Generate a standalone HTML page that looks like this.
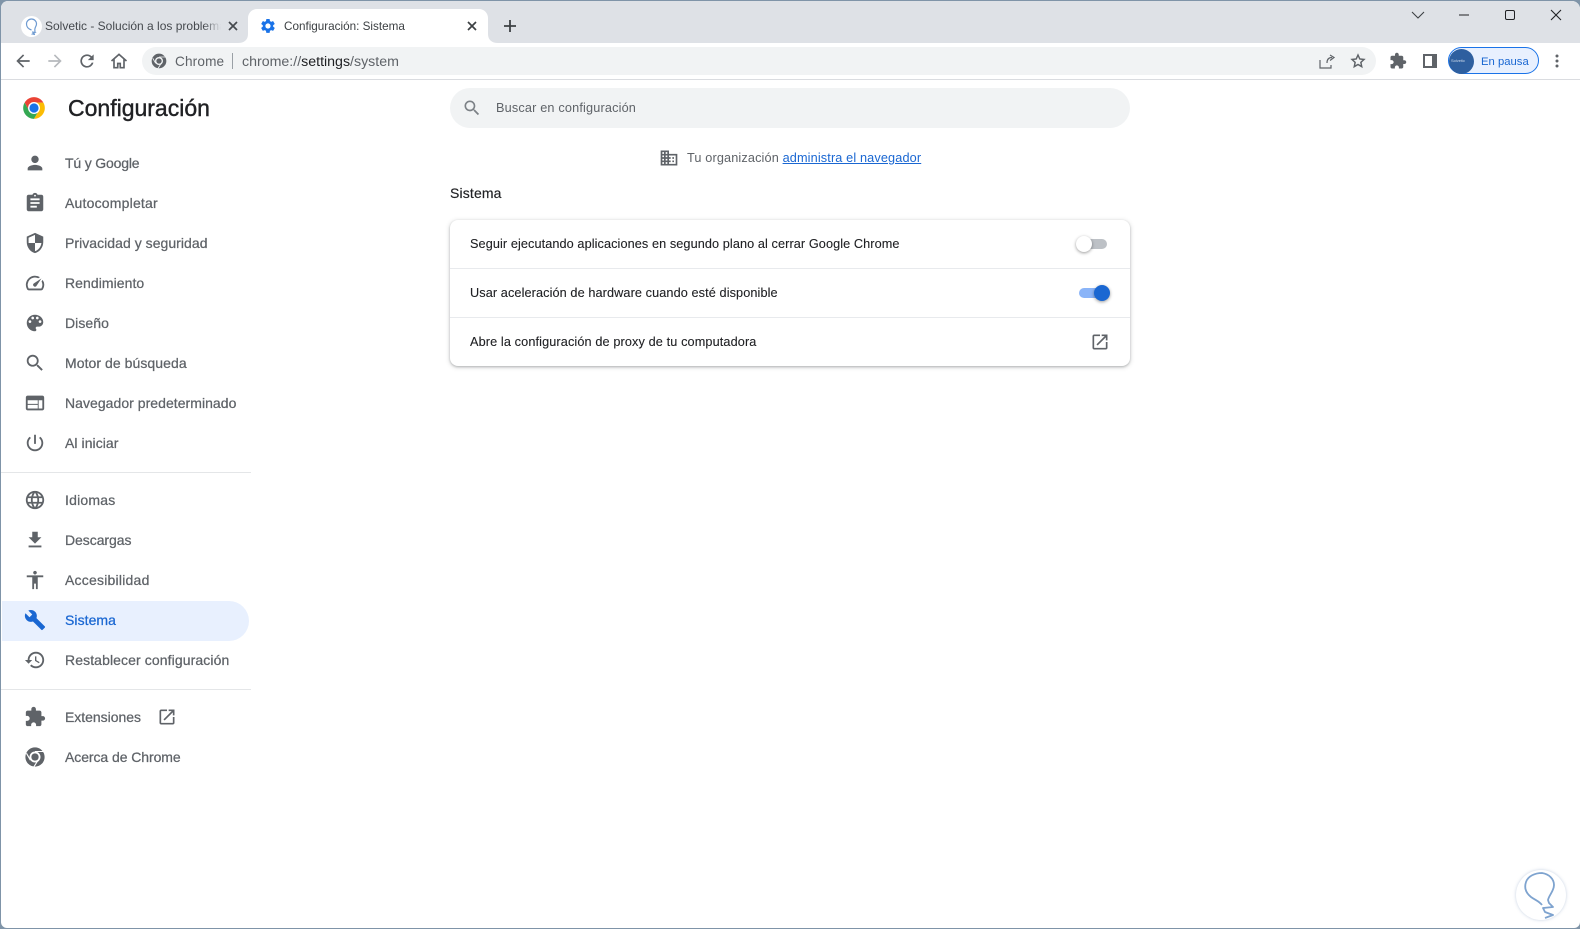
<!DOCTYPE html>
<html lang="es"><head><meta charset="utf-8"><title>Configuración: Sistema</title>
<style>
html,body{margin:0;padding:0;width:1580px;height:929px;overflow:hidden;background:#7f94a8}
body{font-family:"Liberation Sans",sans-serif;position:relative}
#w{position:absolute;left:1px;top:1px;width:1579px;height:927px;background:#fff;border-radius:7px 8px 6px 6px;overflow:hidden}
#p{position:absolute;left:-1px;top:-1px;width:1580px;height:929px}
.a{position:absolute;white-space:nowrap}
svg{position:absolute;display:block}
.n{left:65px;font-size:14px;letter-spacing:.06px;line-height:20px;height:20px;color:#5f6368;-webkit-text-stroke:.25px #5f6368}
.r{left:470px;font-size:12.7px;letter-spacing:.1px;line-height:20px;height:20px;color:#202124;-webkit-text-stroke:.1px #202124}
.i{left:24px;width:22px;height:22px;fill:#5f6368}
</style></head><body><div id="w"><div id="p">
<div class="a" style="left:0;top:0;width:1580px;height:43px;background:#dee1e6"></div>
<div class="a" style="left:0;top:79px;width:1580px;height:1px;background:#dadce0"></div>

<!-- tabs -->
<svg style="left:238px;top:9px" width="260" height="34"><path d="M0 34c6 0 10-3 10-9V9c0-5 4-9 9-9h222c5 0 9 4 9 9v16c0 6 4 9 10 9z" fill="#fff"/></svg>
<div class="a" style="left:21px;top:16px;width:21px;height:21px;border-radius:50%;background:#fff"></div>
<svg style="left:21px;top:16px" width="21" height="21" viewBox="0 0 21 21" fill="none" stroke="#6f9bd1" stroke-width="1.2"><path d="M10.500 14c-3-1-5-3-5-6a5 5 0 0 1 10 0c0 2-1.500 3-1.700 5.500l.2 2.500M11 16l3 .5-2.500 1.500 2.500.5"/></svg>
<div class="a" style="left:45px;top:17px;width:176px;overflow:hidden;font-size:12px;line-height:18px;color:#45494e;-webkit-mask-image:linear-gradient(90deg,#000 90%,transparent)">Solvetic - Solución a los problemas informáticos</div>
<svg style="left:225px;top:18px" width="16" height="16" viewBox="0 0 16 16" stroke="#45494e" stroke-width="1.700"><path d="M4 4l8 8M12 4l-8 8"/></svg>
<svg style="left:260px;top:17px;fill:#1a73e8" width="16" height="18" viewBox="0 0 24 24"><path transform="translate(-1 -1) scale(1.08)" d="M19.140 12.940c.04-.3.06-.61.06-.94 0-.32-.02-.64-.07-.94l2.030-1.580c.18-.14.23-.41.12-.61l-1.920-3.320c-.12-.22-.37-.29-.59-.22l-2.390.96c-.5-.38-1.030-.7-1.620-.94l-.36-2.540c-.04-.24-.24-.41-.48-.41h-3.840c-.24 0-.43.17-.47.41l-.36 2.540c-.59.24-1.130.57-1.620.94l-2.390-.96c-.22-.08-.47 0-.59.22L2.740 8.870c-.12.21-.08.47.12.61l2.030 1.580c-.05.3-.09.63-.09.94s.02.64.07.94l-2.030 1.580c-.18.14-.23.41-.12.61l1.920 3.320c.12.22.37.29.59.22l2.390-.96c.5.38 1.030.7 1.620.94l.36 2.540c.05.24.24.41.48.41h3.840c.24 0 .44-.17.47-.41l.36-2.540c.59-.24 1.130-.56 1.620-.94l2.390.96c.22.08.47 0 .59-.22l1.920-3.320c.12-.22.07-.47-.12-.61l-2.010-1.580zM12 15.600c-1.980 0-3.600-1.620-3.600-3.600s1.620-3.600 3.600-3.600 3.600 1.620 3.600 3.600-1.620 3.600-3.600 3.600z"/></svg>
<div class="a" style="left:284px;top:18px;font-size:11.7px;line-height:18px;color:#3c4043">Configuración: Sistema</div>
<svg style="left:464px;top:18px" width="16" height="16" viewBox="0 0 16 16" stroke="#3c4043" stroke-width="1.700"><path d="M4 4l8 8M12 4l-8 8"/></svg>
<svg style="left:502px;top:18px" width="16" height="16" viewBox="0 0 16 16" stroke="#3c4043" stroke-width="1.800"><path d="M8 2v12M2 8h12"/></svg>

<!-- window controls -->
<svg style="left:1410px;top:9px" width="16" height="12" fill="none" stroke="#3c4043" stroke-width="1.100"><path d="M2 3l6 6 6-6"/></svg>
<svg style="left:1458px;top:9px" width="12" height="12" stroke="#202124" stroke-width="1.100"><path d="M1 6h10"/></svg>
<div class="a" style="left:1505px;top:10px;width:8px;height:8px;border:1.200px solid #202124;border-radius:2px"></div>
<svg style="left:1550px;top:9px" width="12" height="12" stroke="#202124" stroke-width="1.100"><path d="M1 1l10 10M11 1L1 11"/></svg>

<!-- toolbar -->
<svg style="left:13px;top:51px" width="20" height="20" viewBox="0 0 24 24" fill="#5f6368"><path d="M20 11H7.830l5.590-5.590L12 4l-8 8 8 8 1.410-1.410L7.830 13H20z"/></svg>
<svg style="left:45px;top:51px" width="20" height="20" viewBox="0 0 24 24" fill="#b6b9bd"><path d="M4 13h12.170l-5.590 5.590L12 20l8-8-8-8-1.410 1.410L16.170 11H4z"/></svg>
<svg style="left:77px;top:51px" width="20" height="20" viewBox="0 0 24 24" fill="#5f6368"><path d="M17.650 6.350A7.960 7.960 0 0 0 12 4a8 8 0 1 0 7.730 10h-2.080A6 6 0 1 1 12 6c1.660 0 3.140.69 4.220 1.780L13 11h7V4z"/></svg>
<svg style="left:109px;top:51px" width="20" height="20" viewBox="0 0 24 24" fill="none" stroke="#5f6368" stroke-width="2"><path d="M3 12L12 4l9 8M6 10v10h4.500v-5h3v5H18V10"/></svg>
<div class="a" style="left:142px;top:47px;width:1234px;height:28px;border-radius:14px;background:#f1f3f4"></div>
<svg style="left:151px;top:53px" width="16" height="16" viewBox="0 0 24 24"><circle cx="12" cy="12" r="11" fill="#5f6368"/><circle cx="12" cy="12" r="6" fill="#f1f3f4"/><circle cx="12" cy="12" r="4" fill="#5f6368"/><path d="M12 6h10M7 15.500L2.700 8M15 16l-5 8" stroke="#f1f3f4" stroke-width="1.300" fill="none"/></svg>
<div class="a" style="left:175px;top:53px;font-size:13.6px;letter-spacing:.15px;line-height:18px;color:#5f6368">Chrome</div>
<div class="a" style="left:232px;top:53px;width:1px;height:16px;background:#9aa0a6"></div>
<div class="a" style="left:242px;top:53px;font-size:14.2px;line-height:18px;color:#5f6368">chrome://<span style="color:#202124">settings</span>/system</div>
<svg style="left:1319px;top:53px" width="16" height="16" viewBox="0 0 16 16" fill="none" stroke="#5f6368" stroke-width="1.200"><path d="M1 7v8h11v-3M8 10c0-4 2-5.500 5-5.500M11 2l4 2.500-4 3"/></svg>
<svg style="left:1350px;top:53px" width="16" height="16" viewBox="0 0 24 24" fill="none" stroke="#5f6368" stroke-width="2.200"><path d="M12 3l2.700 6 6.300.7-4.700 4.300 1.300 6.500-5.600-3.300-5.600 3.300 1.300-6.500L3 9.700 9.300 9z"/></svg>
<svg style="left:1389px;top:52px" width="18" height="18" viewBox="0 0 24 24" fill="#5f6368"><path d="M20.500 11H19V7c0-1.100-.9-2-2-2h-4V3.500C13 2.120 11.880 1 10.500 1S8 2.120 8 3.500V5H4c-1.100 0-1.990.9-1.990 2v3.800H3.500c1.490 0 2.700 1.210 2.700 2.700s-1.210 2.700-2.700 2.700H2V20c0 1.100.9 2 2 2h3.800v-1.500c0-1.490 1.210-2.700 2.700-2.700 1.490 0 2.700 1.210 2.700 2.700V22H17c1.100 0 2-.9 2-2v-4h1.500c1.380 0 2.500-1.120 2.500-2.500S21.880 11 20.500 11z"/></svg>
<svg style="left:1423px;top:54px" width="14" height="14"><path d="M0 0h14v14H0z" fill="#5f6368"/><path d="M2 2h7v10H2z" fill="#fff"/></svg>
<div class="a" style="left:1448px;top:47px;width:89px;height:25px;border:1.500px solid #1a73e8;border-radius:14px;background:#e8f0fe"></div>
<div class="a" style="left:1449px;top:49px;width:25px;height:25px;border-radius:50%;background:#2e5f9f"></div>
<div class="a" style="left:1451px;top:58px;font-size:4px;line-height:6px;color:#cfdbea">Solvetic</div>
<div class="a" style="left:1481px;top:53px;font-size:11.3px;line-height:18px;color:#1a67d2">En pausa</div>
<svg style="left:1555px;top:54px" width="4" height="14" fill="#5f6368"><circle cx="2" cy="2" r="1.500"/><circle cx="2" cy="7" r="1.500"/><circle cx="2" cy="12" r="1.500"/></svg>

<!-- header -->
<svg style="left:21px;top:95px" width="26" height="26" viewBox="0 0 48 48"><path d="M24 24L15 29 6.680 14A20 20 0 0 1 41.320 14H24z" fill="#ea4335"/><path d="M24 24l9 5-9 15A20 20 0 0 1 6.680 14L15 29z" fill="#34a853"/><path d="M24 24V14H41.320A20 20 0 0 1 24 44l9-15z" fill="#fbbc04"/><circle cx="24" cy="24" r="11" fill="#fff"/><circle cx="24" cy="24" r="8.500" fill="#1a73e8"/></svg>
<div class="a" style="left:68px;top:94px;font-size:23px;line-height:28px;color:#202124;-webkit-text-stroke:.4px #202124">Configuración</div>

<!-- nav -->
<svg class="a i" style="top:152px" viewBox="0 0 24 24"><path d="M12 12c2.210 0 4-1.790 4-4s-1.790-4-4-4-4 1.790-4 4 1.790 4 4 4zm0 2c-2.670 0-8 1.340-8 4v2h16v-2c0-2.660-5.330-4-8-4z"/></svg>
<div class="a n" style="top:153px;letter-spacing:-.17px">Tú y Google</div>
<svg class="a i" style="top:192px" viewBox="0 0 24 24"><path d="M19 3h-4.180C14.400 1.840 13.300 1 12 1c-1.300 0-2.400.84-2.820 2H5c-1.100 0-2 .9-2 2v14c0 1.100.9 2 2 2h14c1.100 0 2-.9 2-2V5c0-1.100-.9-2-2-2zm-7 0c.55 0 1 .45 1 1s-.45 1-1 1-1-.45-1-1 .45-1 1-1zm2 14H7v-2h7v2zm3-4H7v-2h10v2zm0-4H7V7h10v2z"/></svg>
<div class="a n" style="top:193px;letter-spacing:.2px">Autocompletar</div>
<svg class="a i" style="top:232px" viewBox="0 0 24 24"><path d="M12 1L3 5v6c0 5.550 3.840 10.740 9 12 5.160-1.260 9-6.450 9-12V5l-9-4zm0 10.990h7c-.53 4.120-3.280 7.790-7 8.940V12H5V6.300l7-3.110v8.800z"/></svg>
<div class="a n" style="top:233px;letter-spacing:.04px">Privacidad y seguridad</div>
<svg class="a i" style="top:272px" viewBox="0 0 24 24"><path d="M20.380 8.570l-1.230 1.850a8 8 0 0 1-.22 7.580H5.070A8 8 0 0 1 15.580 6.850l1.850-1.230A10 10 0 0 0 3.350 19a2 2 0 0 0 1.720 1h13.850a2 2 0 0 0 1.740-1 10 10 0 0 0-.27-10.440zm-9.790 6.840a2 2 0 0 0 2.830 0l5.660-8.490-8.490 5.660a2 2 0 0 0 0 2.830z"/></svg>
<div class="a n" style="top:273px">Rendimiento</div>
<svg class="a i" style="top:312px" viewBox="0 0 24 24"><path d="M12 3c-4.970 0-9 4.030-9 9s4.030 9 9 9c.83 0 1.500-.67 1.500-1.500 0-.39-.15-.74-.39-1.010-.23-.26-.38-.61-.38-.99 0-.83.67-1.500 1.500-1.500H16c2.760 0 5-2.240 5-5 0-4.420-4.030-8-9-8zm-5.500 9c-.83 0-1.500-.67-1.500-1.500S5.670 9 6.500 9 8 9.670 8 10.500 7.330 12 6.500 12zm3-4C8.670 8 8 7.330 8 6.500S8.670 5 9.500 5s1.500.67 1.500 1.500S10.330 8 9.500 8zm5 0c-.83 0-1.500-.67-1.500-1.500S13.670 5 14.500 5s1.500.67 1.500 1.500S15.330 8 14.500 8zm3 4c-.83 0-1.500-.67-1.500-1.500S16.670 9 17.500 9s1.500.67 1.500 1.500-.67 1.500-1.500 1.500z"/></svg>
<div class="a n" style="top:313px">Diseño</div>
<svg class="a i" style="top:352px" viewBox="0 0 24 24"><path d="M15.500 14h-.79l-.28-.27C15.410 12.590 16 11.110 16 9.500 16 5.910 13.090 3 9.500 3S3 5.910 3 9.500 5.910 16 9.500 16c1.610 0 3.090-.59 4.230-1.570l.27.28v.79l5 4.990L20.490 19l-4.990-5zm-6 0C7.010 14 5 11.990 5 9.500S7.010 5 9.500 5 14 7.010 14 9.500 11.990 14 9.500 14z"/></svg>
<div class="a n" style="top:353px">Motor de búsqueda</div>
<svg class="a i" style="top:392px" viewBox="0 0 24 24"><path d="M20 4H4c-1.100 0-1.990.9-1.990 2L2 18c0 1.100.9 2 2 2h16c1.100 0 2-.9 2-2V6c0-1.100-.9-2-2-2zm-5 14H4v-4h11v4zm0-5H4V9h11v4zm5 5h-4V9h4v9z"/></svg>
<div class="a n" style="top:393px;letter-spacing:.04px">Navegador predeterminado</div>
<svg class="a i" style="top:432px" viewBox="0 0 24 24"><path d="M13 3h-2v10h2V3zm4.830 2.170l-1.420 1.420C17.990 7.860 19 9.810 19 12c0 3.870-3.130 7-7 7s-7-3.130-7-7c0-2.190 1.010-4.140 2.580-5.420L6.170 5.170C4.230 6.820 3 9.260 3 12c0 4.970 4.030 9 9 9s9-4.030 9-9c0-2.740-1.230-5.180-3.170-6.830z"/></svg>
<div class="a n" style="top:433px">Al iniciar</div>
<div class="a" style="left:1px;top:472px;width:250px;height:1px;background:#e4e6e8"></div>
<svg class="a i" style="top:489px" viewBox="0 0 24 24"><path d="M11.990 2C6.470 2 2 6.480 2 12s4.470 10 9.990 10C17.520 22 22 17.520 22 12S17.520 2 11.990 2zm6.930 6h-2.950c-.32-1.250-.78-2.450-1.380-3.560 1.840.63 3.370 1.910 4.330 3.560zM12 4.040c.83 1.200 1.480 2.530 1.910 3.960h-3.820c.43-1.430 1.080-2.760 1.910-3.960zM4.260 14C4.100 13.360 4 12.690 4 12s.1-1.360.26-2h3.380c-.08.66-.14 1.320-.14 2 0 .68.06 1.340.14 2H4.260zm.82 2h2.950c.32 1.250.78 2.450 1.380 3.560-1.840-.63-3.370-1.900-4.330-3.560zm2.950-8H5.080c.96-1.660 2.490-2.930 4.330-3.560C8.810 5.550 8.350 6.750 8.030 8zM12 19.960c-.83-1.200-1.480-2.530-1.910-3.960h3.820c-.43 1.430-1.080 2.760-1.910 3.960zM14.340 14H9.660c-.09-.66-.16-1.320-.16-2 0-.68.07-1.350.16-2h4.680c.09.65.16 1.320.16 2 0 .68-.07 1.340-.16 2zm.25 5.560c.6-1.110 1.060-2.310 1.380-3.560h2.950c-.96 1.650-2.490 2.930-4.330 3.560zM16.360 14c.08-.66.14-1.320.14-2 0-.68-.06-1.340-.14-2h3.380c.16.64.26 1.310.26 2s-.1 1.360-.26 2h-3.380z"/></svg>
<div class="a n" style="top:490px;letter-spacing:.2px">Idiomas</div>
<svg class="a i" style="top:529px" viewBox="0 0 24 24"><path d="M19 9h-4V3H9v6H5l7 7 7-7zM5 18v2h14v-2H5z"/></svg>
<div class="a n" style="top:530px;letter-spacing:-.05px">Descargas</div>
<svg class="a i" style="top:569px" viewBox="0 0 24 24"><path d="M12 2c1.100 0 2 .9 2 2s-.9 2-2 2-2-.9-2-2 .9-2 2-2zm9 7h-6v13h-2v-6h-2v6H9V9H3V7h18v2z"/></svg>
<div class="a n" style="top:570px;letter-spacing:.22px">Accesibilidad</div>
<div class="a" style="left:2px;top:601px;width:247px;height:40px;background:#e8f0fe;border-radius:0 20px 20px 0"></div>
<svg class="a i" style="top:609px;fill:#1a67d2" viewBox="0 0 24 24"><path d="M22.700 19l-9.100-9.100c.9-2.300.4-5-1.500-6.900-2-2-5-2.400-7.400-1.300L9 6 6 9 1.600 4.700C.4 7.100.9 10.100 2.900 12.100c1.900 1.900 4.600 2.400 6.900 1.500l9.100 9.100c.4.4 1 .4 1.400 0l2.300-2.300c.5-.4.500-1.100.1-1.400z"/></svg>
<div class="a n" style="top:610px;color:#1a67d2;-webkit-text-stroke-color:#1a67d2">Sistema</div>
<svg class="a i" style="top:649px" viewBox="0 0 24 24"><path d="M13 3c-4.970 0-9 4.030-9 9H1l3.890 3.890.07.14L9 12H6c0-3.870 3.130-7 7-7s7 3.130 7 7-3.130 7-7 7c-1.930 0-3.680-.79-4.940-2.060l-1.420 1.420C8.270 19.990 10.510 21 13 21c4.970 0 9-4.030 9-9s-4.030-9-9-9zm-1 5v5l4.280 2.540.72-1.210-3.500-2.080V8H12z"/></svg>
<div class="a n" style="top:650px;letter-spacing:.1px">Restablecer configuración</div>
<div class="a" style="left:1px;top:689px;width:250px;height:1px;background:#e4e6e8"></div>
<svg class="a i" style="top:706px" viewBox="0 0 24 24"><path d="M20.500 11H19V7c0-1.100-.9-2-2-2h-4V3.500C13 2.120 11.880 1 10.500 1S8 2.120 8 3.500V5H4c-1.100 0-1.990.9-1.990 2v3.800H3.500c1.490 0 2.700 1.210 2.700 2.700s-1.210 2.700-2.700 2.700H2V20c0 1.100.9 2 2 2h3.800v-1.500c0-1.490 1.210-2.700 2.700-2.700 1.490 0 2.700 1.210 2.700 2.700V22H17c1.100 0 2-.9 2-2v-4h1.500c1.380 0 2.500-1.120 2.500-2.500S21.880 11 20.500 11z"/></svg>
<div class="a n" style="top:707px;letter-spacing:-.03px">Extensiones</div>
<svg class="a" style="left:157px;top:707px;fill:#5f6368" width="20" height="20" viewBox="0 0 24 24"><path d="M19 19H5V5h7V3H5c-1.110 0-2 .9-2 2v14c0 1.100.89 2 2 2h14c1.100 0 2-.9 2-2v-7h-2v7zM14 3v2h3.590l-9.830 9.830 1.410 1.410L19 6.410V10h2V3h-7z"/></svg>
<svg class="a" style="left:24px;top:746px" width="22" height="22" viewBox="0 0 24 24"><circle cx="12" cy="12" r="10.500" fill="#5f6368"/><circle cx="12" cy="12" r="6" fill="#fff"/><circle cx="12" cy="12" r="4" fill="#5f6368"/><path d="M12 6h9.500M7 15.500L2.700 8M15 16l-5 8" stroke="#fff" stroke-width="1.200" fill="none"/></svg>
<div class="a n" style="top:747px;letter-spacing:-.07px">Acerca de Chrome</div>

<!-- main -->
<div class="a" style="left:450px;top:88px;width:680px;height:40px;border-radius:20px;background:#f1f3f4"></div>
<svg class="a" style="left:462px;top:98px;fill:#7c8186" width="20" height="20" viewBox="0 0 24 24"><path d="M15.500 14h-.79l-.28-.27C15.410 12.590 16 11.110 16 9.500 16 5.910 13.090 3 9.500 3S3 5.910 3 9.500 5.910 16 9.500 16c1.610 0 3.090-.59 4.230-1.570l.27.28v.79l5 4.990L20.490 19l-4.990-5zm-6 0C7.010 14 5 11.990 5 9.500S7.010 5 9.500 5 14 7.010 14 9.500 11.990 14 9.500 14z"/></svg>
<div class="a" style="left:496px;top:98px;font-size:12.7px;letter-spacing:.17px;line-height:20px;color:#5f6368">Buscar en configuración</div>
<svg class="a" style="left:659px;top:148px;fill:#5f6368" width="20" height="20" viewBox="0 0 24 24"><path d="M12 7V3H2v18h20V7H12zM6 19H4v-2h2v2zm0-4H4v-2h2v2zm0-4H4V9h2v2zm0-4H4V5h2v2zm4 12H8v-2h2v2zm0-4H8v-2h2v2zm0-4H8V9h2v2zm0-4H8V5h2v2zm10 12h-8v-2h2v-2h-2v-2h2v-2h-2V9h8v10zm-2-8h-2v2h2v-2zm0 4h-2v2h2v-2z"/></svg>
<div class="a" style="left:687px;top:148px;font-size:12.7px;letter-spacing:.14px;line-height:20px;color:#5f6368">Tu organización <a style="color:#1a67d2;text-decoration:underline">administra el navegador</a></div>
<div class="a" style="left:450px;top:183px;font-size:14px;letter-spacing:.15px;line-height:20px;color:#202124;-webkit-text-stroke:.15px #202124">Sistema</div>
<div class="a" style="left:450px;top:220px;width:680px;height:146px;background:#fff;border-radius:8px;box-shadow:0 1px 2px rgba(60,64,67,.3),0 1px 4px 1px rgba(60,64,67,.15)"></div>
<div class="a" style="left:450px;top:268px;width:680px;height:1px;background:#e8eaed"></div>
<div class="a" style="left:450px;top:317px;width:680px;height:1px;background:#e8eaed"></div>
<div class="a r" style="top:234px;letter-spacing:.09px">Seguir ejecutando aplicaciones en segundo plano al cerrar Google Chrome</div>
<div class="a r" style="top:283px">Usar aceleración de hardware cuando esté disponible</div>
<div class="a r" style="top:332px;letter-spacing:.12px">Abre la configuración de proxy de tu computadora</div>
<div class="a" style="left:1079px;top:239px;width:28px;height:10px;border-radius:5px;background:#bdc1c6"></div>
<div class="a" style="left:1076px;top:236px;width:16px;height:16px;border-radius:50%;background:#fff;box-shadow:0 1px 3px rgba(0,0,0,.4)"></div>
<div class="a" style="left:1079px;top:288px;width:29px;height:10px;border-radius:5px;background:#8ab4f8"></div>
<div class="a" style="left:1094px;top:285px;width:16px;height:16px;border-radius:50%;background:#1a67d2;box-shadow:0 1px 3px rgba(0,0,0,.4)"></div>
<svg class="a" style="left:1090px;top:332px;fill:#5f6368" width="20" height="20" viewBox="0 0 24 24"><path d="M19 19H5V5h7V3H5c-1.110 0-2 .9-2 2v14c0 1.100.89 2 2 2h14c1.100 0 2-.9 2-2v-7h-2v7zM14 3v2h3.590l-9.830 9.830 1.410 1.410L19 6.410V10h2V3h-7z"/></svg>

<!-- watermark -->
<div class="a" style="left:1516px;top:870px;width:50px;height:50px;border-radius:50%;background:#fff;box-shadow:0 0 3px rgba(90,120,170,.35)"></div>
<svg class="a" style="left:1516px;top:870px" width="50" height="50" viewBox="0 0 50 50" fill="none" stroke="#7ea3cf" stroke-width="1.800" stroke-linejoin="round"><path d="M26 35C23 31 19 30 15 27 10 23 8 18 10 12 12 6 19 3 26 3 33 4 38 9 38 15 38 21 33 25 32 30L33 33 37 37 27 38 29 42 37 45 29 48"/></svg>
</div></div></body></html>
